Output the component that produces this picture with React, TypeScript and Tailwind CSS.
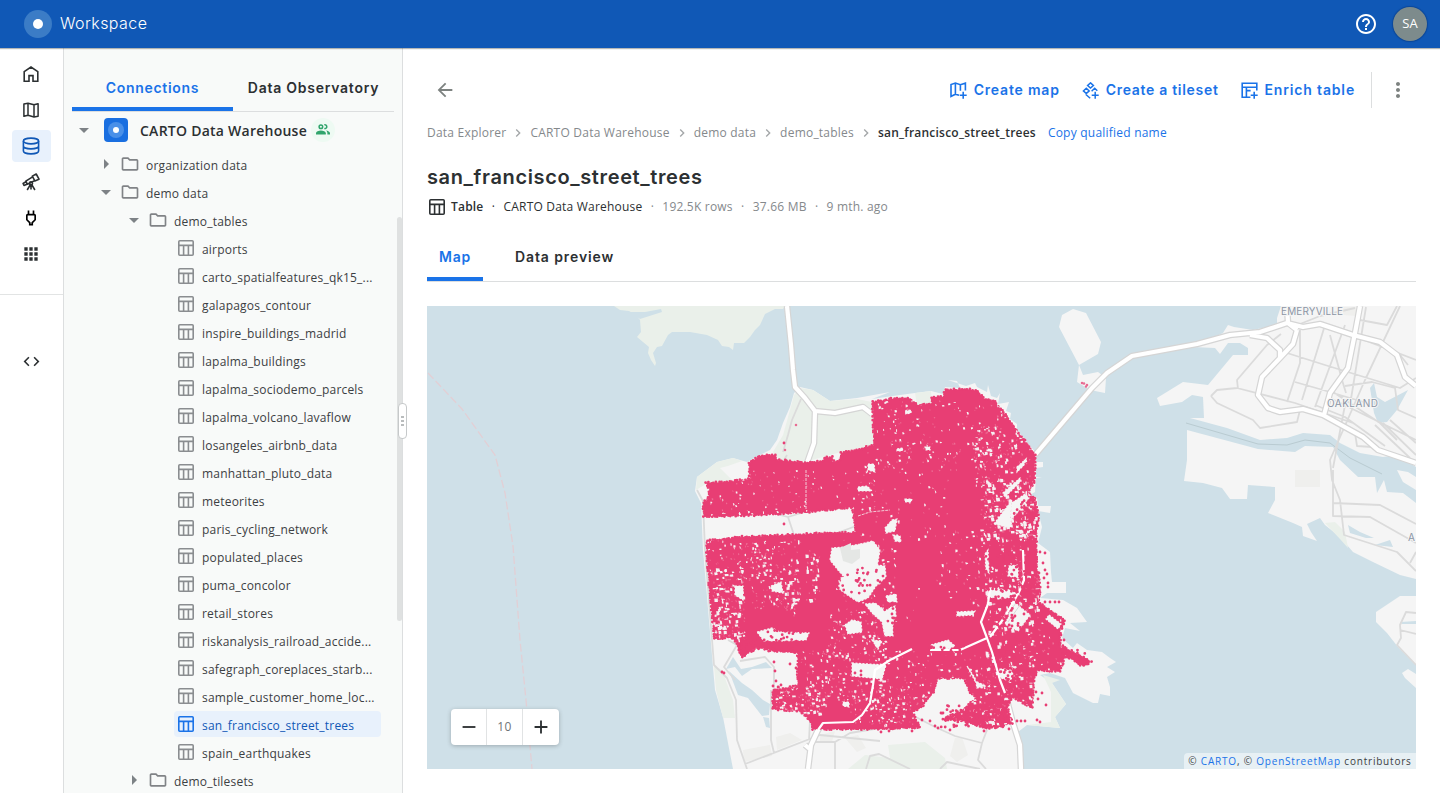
import type { ReactNode } from "react";
import {
  MdApps,
  MdArrowBack,
  MdArrowDropDown,
  MdArrowRight,
  MdCode,
  MdAdd,
  MdHelpOutline,
  MdKeyboardArrowRight,
  MdMoreVert,
  MdOutlineFolder,
  MdOutlinePower,
  MdRemove,
} from "react-icons/md";

type Pt = [number, number];

/* ---------- icons ---------- */

function HomeIcon() {
  return (
    <svg className="size-4" viewBox="0 0 16 16" fill="none" stroke="currentColor" strokeWidth="1.6">
      <path d="M1.2 15.2V5.6L8 1l6.8 4.6v9.6H10V9.6H6v5.6z" />
    </svg>
  );
}

function MapIcon() {
  return (
    <svg className="size-4" viewBox="0 0 16 16" fill="none" stroke="currentColor" strokeWidth="1.5" strokeLinejoin="round">
      <path d="M.9 2 5 1.2l6 1.6 4.1-1v12.4l-4.1.8-6-1.7-4.1 1zM5 1.2v12.1M11 2.8V15" />
    </svg>
  );
}

function DatabaseIcon() {
  return (
    <svg className="size-[18px]" viewBox="0 0 18 18" fill="none" stroke="currentColor" strokeWidth="1.6">
      <ellipse cx="9" cy="4" rx="7.6" ry="2.9" />
      <path d="M1.4 4v10c0 1.6 3.4 2.9 7.6 2.9s7.6-1.3 7.6-2.9V4M1.4 9c0 1.6 3.4 2.9 7.6 2.9s7.6-1.3 7.6-2.9" />
    </svg>
  );
}

function TelescopeIcon() {
  return (
    <svg className="size-[18px]" viewBox="0 0 18 18" fill="none" stroke="currentColor" strokeWidth="1.6" strokeLinejoin="round">
      <path d="M10.3 3.1 14.2 1 17 6.2l-4.2 1.7zM10.6 3.8 3.8 8.2l1.5 3 7.2-3.5M3.9 8.8l-2.8 1.7.9 1.9 3-1.2" />
      <circle cx="9" cy="10.4" r="1.5" />
      <path d="M8.2 11.8 5.2 17M9.9 11.8l3 5.2M9 12v4.5" />
    </svg>
  );
}

function PeopleIcon() {
  return (
    <svg className="h-[11px] w-[14px]" viewBox="0 0 14 11" fill="currentColor">
      <path d="M0 10.6V9.2C0 7.3 2.6 6.4 4.9 6.4s4.9.9 4.9 2.8v1.4z" />
      <path d="M10 6.5c2 .3 4 1.2 4 2.7v1.4h-2.6V9.2c0-1.100-.5-2-1.4-2.700z" />
      <circle cx="4.900" cy="2.700" r="1.800" fill="none" stroke="currentColor" strokeWidth="1.500" />
      <path d="M8.300.9a1.900 1.900 0 1 1 0 3.600" fill="none" stroke="currentColor" strokeWidth="1.500" />
    </svg>
  );
}

function TableIcon({ className }: { className: string }) {
  return (
    <svg className={className} viewBox="0 0 16 16" fill="none" stroke="currentColor" strokeWidth="1.6">
      <rect x=".8" y=".8" width="14.4" height="14.4" rx="1" />
      <path d="M.8 5.4h14.4M5.6 5.4V15M10.400 5.400V15" />
    </svg>
  );
}

function CreateMapIcon() {
  return (
    <svg className="size-[17px]" viewBox="0 0 17 17" fill="none" stroke="currentColor" strokeWidth="1.6">
      <path d="M9 13.2l-3.6-1L1 14.4V2.6l4.4-1.5 5 1.6 5-1.5v7.3M5.4 1.1v11.1M10.4 2.7v6M13.2 9.8v7M9.7 13.3h7" />
    </svg>
  );
}

function TilesetIcon() {
  return (
    <svg className="size-[17px]" viewBox="0 0 17 17" fill="none" stroke="currentColor" strokeWidth="1.5">
      <path d="M8.5.9 11.4 3.5 8.5 6.1 5.6 3.5zM4.3 6.2 7.2 8.9 4.3 11.6 1.4 8.9zM9.6 9.2l3.1-3 2.6 2.5M3.6 12.3l4.6 3.9M13.2 9.8v7M9.7 13.3h7" />
    </svg>
  );
}

function EnrichIcon() {
  return (
    <svg className="size-[17px]" viewBox="0 0 17 17" fill="none" stroke="currentColor" strokeWidth="1.6">
      <path d="M9.4 15.2H1.2V1.2h14.6v7.2M1.2 5.2h14.6M5.4 5.2v10M5.4 8.6h4.2M13.2 9.8v7M9.7 13.3h7" />
    </svg>
  );
}

/* ---------- header and navigation ---------- */

function Header() {
  return (
    <header className="relative z-10 flex h-12 shrink-0 items-center bg-[#1058b6] pl-6 pr-[13px] text-white shadow-[0_1px_1px_rgba(44,48,50,0.35)]">
      <span className="flex size-7 items-center justify-center rounded-full bg-[#3b7cc6]">
        <span className="size-[10px] rounded-full bg-white" />
      </span>
      <span className="mb-[2px] ml-2 text-base font-light tracking-[0.42px]">Workspace</span>
      <MdHelpOutline className="ml-auto size-6" />
      <span className="ml-[15px] flex size-[34px] items-center justify-center rounded-full bg-[#7d8b8c] font-['Open_Sans',sans-serif] text-[13px] tracking-[0.2px] shadow-[0_0_1px_1px_rgba(0,40,100,0.35)]">
        SA
      </span>
    </header>
  );
}

function RailItem({ active, children }: { active?: boolean; children: ReactNode }) {
  return (
    <span
      className={
        active
          ? "flex h-8 w-[39px] items-center justify-center rounded bg-[#e8f1fc] text-[#1058b6]"
          : "flex h-8 w-[39px] items-center justify-center rounded"
      }
    >
      {children}
    </span>
  );
}

function Rail() {
  return (
    <nav className="flex w-16 shrink-0 flex-col border-r border-[#dcdedf] bg-white text-[#2c3032]">
      <div className="flex h-[247px] flex-col items-center gap-1 border-b border-[#e2e4e4] pr-px pt-[10px]">
        <RailItem><HomeIcon /></RailItem>
        <RailItem><MapIcon /></RailItem>
        <RailItem active><DatabaseIcon /></RailItem>
        <RailItem><TelescopeIcon /></RailItem>
        <RailItem><MdOutlinePower className="size-5 text-black" /></RailItem>
        <RailItem><MdApps className="size-5" /></RailItem>
      </div>
      <div className="flex flex-col items-center pr-px pt-[50px]">
        <RailItem><MdCode className="size-[19px]" /></RailItem>
      </div>
    </nav>
  );
}

const tables = [
  "airports",
  "carto_spatialfeatures_qk15_...",
  "galapagos_contour",
  "inspire_buildings_madrid",
  "lapalma_buildings",
  "lapalma_sociodemo_parcels",
  "lapalma_volcano_lavaflow",
  "losangeles_airbnb_data",
  "manhattan_pluto_data",
  "meteorites",
  "paris_cycling_network",
  "populated_places",
  "puma_concolor",
  "retail_stores",
  "riskanalysis_railroad_accide...",
  "safegraph_coreplaces_starb...",
  "sample_customer_home_loc...",
  "san_francisco_street_trees",
  "spain_earthquakes",
];

function FolderRow({ label, open, nested }: { label: string; open?: boolean; nested?: boolean }) {
  const Arrow = open ? MdArrowDropDown : MdArrowRight;
  return (
    <div className={nested ? "flex h-[26px] shrink-0 items-center pl-[58px]" : "flex h-[26px] shrink-0 items-center pl-[30px]"}>
      <Arrow className="size-6 text-[#7d8286]" />
      <MdOutlineFolder className="ml-[2px] size-5 text-[#808386]" />
      <span className="ml-[6px] pt-1">{label}</span>
    </div>
  );
}

function TableRow({ label }: { label: string }) {
  const selected = label === "san_francisco_street_trees";
  return (
    <div
      className={
        selected
          ? "ml-[110px] flex h-[26px] w-[207px] shrink-0 items-center whitespace-nowrap rounded bg-[#e8f1fc] pl-1 text-[#1058b6]"
          : "ml-[110px] flex h-[26px] w-[207px] shrink-0 items-center whitespace-nowrap pl-1"
      }
    >
      <TableIcon className={selected ? "size-4 text-[#1a73e8]" : "size-4 text-[#8a8d90]"} />
      <span className="ml-2 pt-1">{label}</span>
    </div>
  );
}

function Sidebar() {
  return (
    <aside className="relative flex w-[339px] shrink-0 flex-col border-r border-[#dcdedf] bg-[#f8faf9]">
      <div className="mx-2 mt-4 flex h-12 border-b border-[#dcdedf] text-[14px] font-semibold">
        <span className="flex w-[161px] items-center justify-center border-b-4 border-[#1a73e8] pt-1 tracking-[0.7px] text-[#1a73e8]">
          Connections
        </span>
        <span className="flex w-[161px] items-center justify-center tracking-[0.75px] text-[#2c3032]">Data Observatory</span>
      </div>
      <div className="flex min-h-0 flex-1 flex-col gap-[2px] overflow-hidden font-['Open_Sans',sans-serif] text-[12px] tracking-[0.2px] text-[#3c4043]">
        <div className="flex h-[37px] shrink-0 items-center pb-[2px] pl-2">
          <MdArrowDropDown className="size-6 text-[#7d8286]" />
          <span className="ml-2 flex size-6 items-center justify-center rounded-[4px] bg-[#1a6fe0]">
            <span className="flex size-4 items-center justify-center rounded-full bg-[#4a90e8]">
              <span className="size-[6px] rounded-full bg-white" />
            </span>
          </span>
          <span className="ml-3 pt-[2px] text-[14px] font-semibold tracking-[0.25px] text-[#2c3032]">CARTO Data Warehouse</span>
          <span className="ml-[4px] flex size-6 items-center justify-center rounded-full bg-[#eefaf3] text-[#30a46c]">
            <PeopleIcon />
          </span>
        </div>
        <FolderRow label="organization data" />
        <FolderRow label="demo data" open />
        <FolderRow label="demo_tables" open nested />
        {tables.map((t) => (
          <TableRow key={t} label={t} />
        ))}
        <FolderRow label="demo_tilesets" nested />
      </div>
      <div className="absolute right-0 top-[169px] h-[404px] w-[5px] rounded bg-[#dfe1e1]" />
      <div className="absolute -right-[5px] top-[355px] flex h-9 w-[9px] flex-col items-center justify-center gap-[2px] rounded border border-[#c6c9ca] bg-white">
        <span className="h-[2px] w-[3px] bg-[#b9bcbd]" />
        <span className="h-[2px] w-[3px] bg-[#b9bcbd]" />
        <span className="h-[2px] w-[3px] bg-[#b9bcbd]" />
      </div>
    </aside>
  );
}

/* ---------- map ---------- */

const trees: Pt[] = [
  [706, 483], [727, 482], [750, 479], [749, 463], [760, 456], [775, 455], [777, 460], [807, 463], [823, 461], [824, 458],
  [832, 457], [832, 462], [840, 460], [841, 453], [857, 450], [874, 445], [873, 402], [897, 398], [910, 399], [917, 405],
  [932, 404], [932, 397], [943, 397], [945, 390], [967, 389], [978, 391], [983, 398], [995, 402], [1007, 417], [1017, 431],
  [1035, 455], [1034, 483], [1027, 492], [1035, 499], [1038, 515], [1036, 537], [1037, 570], [1040, 590], [1038, 602],
  [1065, 621], [1060, 630], [1060, 645], [1080, 656], [1091, 662], [1083, 666], [1065, 655], [1060, 671], [1037, 670],
  [1033, 683], [1032, 708], [1013, 697], [1007, 707], [1012, 723], [997, 727], [987, 728], [963, 721], [943, 719],
  [963, 710], [977, 697], [970, 693], [965, 678], [937, 678], [933, 693], [923, 705], [912, 713], [920, 727], [900, 728],
  [880, 729], [867, 729], [840, 729], [813, 729], [810, 720], [800, 711], [773, 709], [773, 690], [780, 690], [798, 685],
  [798, 653], [775, 651], [757, 647], [742, 657], [737, 643], [731, 637], [715, 639], [710, 593], [707, 553], [707, 541],
  [742, 537], [793, 535], [827, 533], [856, 533], [853, 507], [807, 512], [754, 515], [704, 517], [703, 503], [708, 499],
  [710, 490],
];

const clearings = [
  "M860 544 873 541 880 550 877 568 868 580 858 586 845 578 838 570 830 560 832 548 845 547z",
  "M866 564 885 566 886 577 876 586 868 598 858 602 846 594 838 588 842 578 855 574z",
  "M865 604 875 603 884 610 895 606 896 616 892 622 893 636 885 636 882 622 872 613z",
  "M757 632 772 628 780 632 809 633 806 640 782 641 764 641z",
  "M845 625 852 620 861 622 862 632 848 634z",
  "M852 663 886 665 882 679 852 676z",
  "M771 586 781 582 783 593 772 591z",
  "M735 586 743 586 743 600 735 595z",
  "M868 464 874 464 875 472 868 470z",
  "M858 487 867 486 872 491 858 491z",
  "M892 520 897 519 895 531 886 533 885 528z",
  "M893 535 900 536 901 542 895 541z",
  "M905 411 911 410 911 413 906 414z",
  "M905 499 912 499 911 502 905 502z",
  "M897 449 903 448 902 451 897 451z",
  "M925 447 930 447 930 450 926 450z",
  "M1017 467 1026 459 1024 465 1017 472z",
  "M1003 493 1020 478 1021 481 1005 497z",
  "M994 524 1012 500 1010 517 1012 527 1002 526z",
  "M1012 503 1025 494 1029 498 1021 508 1010 521z",
  "M957 612 975 611 973 615 957 616z",
  "M967 666 975 678 977 688 986 686 975 681z",
  "M1000 669 1010 669 1014 676 1009 681 999 677z",
  "M1014 602 1030 615 1018 631 1005 624z",
  "M1049 615 1061 624 1058 629 1046 619z",
  "M1009 566 1018 565 1018 578 1008 576z",
  "M990 588 1010 590 1020 596 998 599 990 597z",
  "M872 640 882 641 878 649z",
  "M931 645 948 640 955 646 946 650 934 650z",
  "M886 596 896 594 897 602 888 602z",
  "M882 612 894 611 892 636 884 632z",
  "M843 702 849 702 849 707 843 706z",
  "M985 554 988 550 989 573 986 570z",
];

const land = [
  "M695 491 697 477 705 471 717 462 733 458 747 462 760 455 770 450 777 440 783 423 790 407 794 393 800 387 813 390 830 401 857 398 890 392 872 399 900 395 915 393 931 391 943 394 945 387 960 388 957 381 948 380 966 386 975 383 977 387 987 392 988 385 991 396 997 398 1000 393 998 404 1009 402 1006 411 1011 413 1010 419 1017 424 1017 430 1036 453 1036 462 1043 462 1043 467 1036 468 1036 477 1042 477 1036 478 1035 492 1030 495 1037 498 1038 506 1051 506 1050 513 1038 511 1042 527 1038 543 1050 552 1051 572 1052 582 1066 582 1066 593 1047 593 1040 598 1063 600 1077 608 1087 622 1070 623 1080 631 1065 628 1062 638 1073 648 1077 643 1087 650 1102 652 1110 658 1116 662 1107 667 1115 672 1107 677 1110 687 1110 696 1100 694 1098 703 1093 703 1073 693 1065 678 1050 673 1040 675 1052 683 1066 704 1055 717 1060 728 1027 725 1018 732 1022 747 1023 769 733 769 723 717 715 690 713 667 703 550 701 503z",
  "M1059 327 1062 315 1073 309 1086 313 1101 342 1098 354 1079 365 1083 375 1098 372 1106 378 1105 393 1090 390 1077 382 1079 365z",
  "M1281 306 1277 318 1277 325 1253 330 1234 327 1228 325 1223 333 1193 347 1215 348 1220 354 1228 343 1240 343 1248 348 1248 355 1233 355 1208 385 1183 382 1157 398 1160 406 1182 402 1192 395 1203 397 1204 418 1190 418 1227 428 1260 440 1287 438 1303 433 1330 435 1340 443 1360 453 1383 457 1397 455 1416 467V306z",
  "M1187 430 1258 449 1295 452 1305 446 1333 447 1340 460 1358 477 1375 477 1377 493 1384 480 1387 492 1403 493 1416 503V579L1400 575 1373 562 1353 552 1340 537 1325 525 1320 518 1307 524 1311 532 1317 541 1303 536 1302 527 1293 523 1268 513 1275 500 1275 487 1248 485 1247 499 1230 499 1222 488 1203 483 1184 481 1187 460z",
  "M1397 470 1408 472 1416 477V490L1403 482z",
  "M1400 596H1416V665L1398 647 1387 633 1376 622V612z",
  "M1402 673 1408 669 1416 674V688L1405 678z",
];

const parks = [
  "M614 306 620 310 629 311 636 315 640 320 641 332 637 337 649 347 648 353 651 360 655 366 656 363 653 353 657 347 662 346 668 335 672 332 690 332 707 335 718 340 722 346 729 347 733 350 734 343 744 343 750 337 755 330 760 325 765 314 775 309 783 309 785 306z",
  "M800 388 813 390 830 401 857 399 872 402 875 445 841 452 808 461 780 461 773 452 783 435 790 410 794 395z",
  "M696 490 697 477 705 471 717 462 733 458 742 461 728 466 720 468 732 480 706 484z",
  "M915 393 931 391 932 403 917 405z",
  "M714 666 722 670 733 700 735 718 723 718 716 690z",
  "M1043 675 1060 680 1052 683 1066 704 1055 717 1060 728 1027 725 1051 722 1051 692z",
  "M888 745 925 742 945 758 947 769 848 769 865 755 890 758z",
  "M1325 523 1335 522 1345 532 1348 548 1340 539z",
];

const water = [
  "M629 312 645 312 661 309 662 312 640 319z",
  "M733 657 741 669 752 667 766 662 772 668 752 669 742 676 735 667 726 669z",
  "M729 671 742 683 752 690 763 700 770 704 769 715 762 716 748 698 738 695z",
  "M763 717 769 718 770 728 766 727z",
  "M1370 388 1374 383 1377 397 1385 402 1408 390 1397 410 1387 422 1378 423 1374 413z",
  "M1348 525 1360 532 1374 538 1366 538 1350 533z",
  "M1375 545 1390 540 1393 547z",
  "M1400 622 1416 621V624L1402 624z",
];

const streets = [
  "M697 490 703 501 705 550 714 665 727 678 736 700 737 740 747 769M735 680 724 667 737 645 728 640M745 764 820 735 880 741M771 690 771 740 774 753",
  "M740 661 752 659 765 657 774 667 774 690M835 742 835 769M812 742 835 742 850 733 880 728M810 720 809 740",
  "M866 769 870 756 879 754 910 769M912 715 935 727 955 736 982 743 987 730M940 769 947 762 980 769M982 743 978 760 986 769",
  "M787 455 784 460M801 399 792 420 788 435 783 452M776 514 788 517 794 535M788 517 808 511M837 533 856 526 856 510M807 463 808 510",
  "M1238 389 1237 380 1267 345 1281 334M1211 396 1217 390 1237 388 1295 403 1353 423M1211 396 1217 403 1253 420 1260 428 1297 422 1300 410",
  "M1300 330V363L1287 402M1325 325 1302 400M1345 325 1315 407M1287 353 1325 365 1400 388 1416 378M1295 382 1330 392 1370 404",
  "M1330 335 1342 380 1346 393M1400 306 1365 380 1330 460 1332 480 1340 500 1344 535 1397 552 1416 571M1360 320 1387 325 1397 306M1333 328 1416 360",
  "M1290 328 1320 316 1355 308M1315 405 1345 417 1385 446M1330 398 1416 440M1345 386 1372 382 1395 388 1398 410 1416 418M1333 392 1380 423 1397 440",
  "M1355 433 1357 446 1372 447M1345 405 1333 468M1375 425 1410 458M1383 423 1416 455M1390 420 1416 443M1333 470V516L1370 517 1416 543M1333 503 1380 505 1416 524M1416 552 1410 563",
  "M1416 613 1406 612 1400 625 1401 638 1397 645 1416 665M1400 630 1416 634M1366 307 1350 405M1400 355 1408 365",
];

const highways = [
  "M787 306 791 345 793 370 795 387 805 398 815 411 835 413 863 407 872 414M815 411 814 443 807 463",
  "M1035 455 1092 388 1107 373 1132 356 1197 344 1230 335 1260 332 1287 323 1303 327 1320 324 1353 335 1380 342 1397 355 1405 377 1416 386",
  "M1250 335 1267 338 1280 350 1280 358 1262 377 1258 395 1268 408 1280 412 1303 409 1323 415 1363 437 1378 450 1416 463",
  "M1297 330 1293 344 1280 358M1360 306 1355 333 1348 368 1330 393 1324 415M1287 306 1288 323 1297 330",
  "M808 769 811 745 818 730 823 723M805 745 811 750M1005 693 1013 723 1020 745 1021 769",
];

const freeways =
  "M818 730 823 723 853 722 862 715 870 703 873 685 875 670 890 660 912 649M930 650 960 650 987 638 981 622 988 604 990 588M987 638 992 652 1000 680 1005 693M1023 550 1024 580 1019 592 1004 618 990 637";

function makeRandom(seed: number) {
  let s = seed;
  return () => {
    s = (s * 1664525 + 1013904223) % 4294967296;
    return s / 4294967296;
  };
}

const dot = (x: number, y: number, r: number) =>
  `M${(x - r).toFixed(1)} ${y.toFixed(1)}a${r} ${r} 0 1 0 ${2 * r} 0a${r} ${r} 0 1 0 ${-2 * r} 0`;

/** Tree points along the outline of the covered area. */
function edgeDots(points: Pt[]) {
  const rnd = makeRandom(11);
  let d = "";
  points.forEach(([x1, y1], i) => {
    const [x2, y2] = points[(i + 1) % points.length];
    const n = Math.max(1, Math.round(Math.hypot(x2 - x1, y2 - y1) / 2.6));
    for (let k = 0; k < n; k++) {
      const t = k / n;
      d += dot(x1 + (x2 - x1) * t + rnd() * 1.6 - 0.8, y1 + (y2 - y1) * t + rnd() * 1.6 - 0.8, 1.4);
    }
  });
  return d;
}

/** x, y, width, height, count, maximum gap size */
const gapZones: [number, number, number, number, number, number][] = [
  [706, 470, 170, 45, 60, 1.3],
  [706, 540, 60, 40, 45, 1.6],
  [712, 568, 32, 72, 90, 3],
  [750, 538, 50, 70, 70, 2],
  [805, 550, 14, 50, 18, 3.2],
  [782, 565, 16, 50, 18, 3],
  [835, 540, 60, 70, 40, 2],
  [860, 440, 90, 100, 45, 1.6],
  [875, 400, 130, 70, 90, 1.6],
  [970, 425, 60, 60, 75, 2.4],
  [980, 480, 58, 60, 150, 3.2],
  [940, 530, 100, 60, 50, 2],
  [985, 575, 55, 60, 80, 3],
  [890, 560, 90, 70, 14, 1.5],
  [825, 610, 60, 50, 60, 2],
  [800, 650, 50, 55, 60, 2],
  [850, 680, 60, 45, 55, 2],
  [775, 685, 45, 28, 50, 2.8],
  [870, 650, 120, 78, 120, 2],
  [985, 640, 50, 85, 80, 2.6],
  [1010, 600, 60, 70, 25, 1.5],
];

function gaps(light: boolean) {
  const rnd = makeRandom(light ? 5 : 29);
  let d = "";
  for (const [x, y, w, h, n, m] of gapZones) {
    for (let i = 0; i < n; i++) {
      const gx = x + rnd() * w;
      const gy = y + rnd() * h;
      const a = 0.7 + rnd() * (light ? 0.8 : m);
      const b = 0.7 + rnd() * (light ? 0.8 : m);
      d += `M${gx.toFixed(1)} ${gy.toFixed(1)}l${a.toFixed(1)} ${(rnd() - 0.5).toFixed(1)} ${(rnd() * 0.8).toFixed(1)} ${b.toFixed(1)} ${(-a).toFixed(1)} ${(rnd() * 0.8).toFixed(1)}z`;
    }
  }
  return d;
}

/** Loose points: x, y, width, height, count */
const looseZones: [number, number, number, number, number][] = [
  [838, 568, 36, 26, 22],
  [866, 568, 18, 22, 8],
  [738, 630, 66, 22, 60],
  [774, 684, 26, 22, 28],
  [985, 588, 36, 40, 50],
  [986, 550, 50, 42, 60],
  [941, 705, 65, 22, 90],
  [1000, 632, 30, 60, 60],
  [1060, 650, 25, 10, 16],
  [1012, 500, 24, 25, 30],
  [930, 645, 35, 10, 14],
  [884, 596, 10, 34, 10],
];

const singles: Pt[] = [
  [784, 443], [784, 524], [722, 672], [724, 673], [774, 662], [775, 671], [776, 681], [781, 685],
  [790, 664], [796, 668], [773, 686], [1040, 552], [1045, 553], [1043, 563],
  [1045, 570], [1047, 574], [1044, 578], [1048, 583], [1048, 587], [1039, 573], [1045, 602], [1050, 602], [1055, 602],
  [1059, 602], [1036, 692], [1042, 693], [1046, 705], [1038, 699], [1037, 720], [1040, 722], [1017, 721], [1021, 721], [1025, 721],
  [941, 713], [943, 713], [922, 720], [930, 721], [935, 726], [938, 728], [1061, 635], [1064, 640], [1080, 660], [1087, 664],
  [881, 732], [912, 731], [889, 731], [950, 730], [984, 731], [1009, 729], [855, 673], [861, 671], [861, 675], [1013, 618], [1015, 616], [1024, 614],
];

const faintSingles: Pt[] = [[796, 425], [785, 450], [1082, 383], [1084, 383.5], [1087, 385], [1086, 386.500]];

function looseDots() {
  const rnd = makeRandom(77);
  let d = singles.map(([x, y]) => dot(x, y, 1.4)).join("");
  for (const [x, y, w, h, n] of looseZones) {
    for (let i = 0; i < n; i++) d += dot(x + rnd() * w, y + rnd() * h, 1.4);
  }
  return d;
}

const treePath = "M" + trees.map((p) => p.join(" ")).join("L") + "Z";
const edgePath = edgeDots(trees);
const gapPath = gaps(false);
const lightGapPath = gaps(true);
const loosePath = looseDots();
const faintPath = faintSingles.map(([x, y]) => dot(x, y, 1.3)).join("");

function MapDrawing() {
  return (
    <svg className="block h-[463px] w-full" viewBox="427 306 989 463" preserveAspectRatio="xMinYMin slice">
      <defs>
        <clipPath id="covered">
          <path d={treePath} />
        </clipPath>
      </defs>
      <rect x="427" y="306" width="989" height="463" fill="#cfe0e8" />
      <path d="M428 373 462 409 495 455 505 493 513 546 520 640 526 700 532 769" fill="none" stroke="#e2cfd5" strokeWidth="1.3" strokeDasharray="8 3" />
      <path d={land.join("")} fill="#f5f5f5" />
      <path d={parks.join("")} fill="#eaf0ea" />
      <path
        d="M1295 470H1320V487H1295zM776 737 790 733 802 740 777 750zM743 750 770 745 772 756 744 762zM820 735 835 731 832 742 820 741zM845 738 858 735 866 748 857 752zM955 738 962 737 968 755 957 762 950 756zM1343 307H1356V316L1343 315z"
        fill="#efefed"
      />
      <path d={water.join("")} fill="#cfe0e8" />
      <path d="M1186 423 1258 444 1287 445 1305 440 1330 443 1350 458 1382 474" fill="none" stroke="#b9cbd1" strokeWidth="1" />
      <path d={streets.join("")} fill="none" stroke="#dbdbdb" strokeWidth="1.8" strokeLinejoin="round" />
      <path d={highways.join("")} fill="none" stroke="#d5d5d5" strokeWidth="6.600" strokeLinejoin="round" />
      <path d={highways.join("")} fill="none" stroke="#ffffff" strokeWidth="4.200" strokeLinejoin="round" />

      <path d={treePath} fill="#e83e74" />
      <path d={edgePath} fill="#e83e74" />
      <g clipPath="url(#covered)">
        <path d={lightGapPath} fill="#ee6d95" />
        <path d={gapPath} fill="#f5f0f2" />
      </g>
      <path d={clearings.join("")} fill="#f5f5f5" stroke="#f5f5f5" strokeWidth="1.2" strokeDasharray="2 1.5" />
      <path d="M840 548 851 543 851 550 860 549 860 558 852 564 843 561z" fill="#e5e7e5" />
      <path d="M858 516 870 512 890 510M806 470V510" fill="none" stroke="#f3c9d6" strokeWidth="1" strokeDasharray="3 1" />
      <path d={freeways} fill="none" stroke="#ffffff" strokeWidth="2.2" strokeLinejoin="round" />
      <path d="M1004 620 1016 603M1008 622 1020 605" stroke="#d9d9d9" strokeWidth="1" />
      <path d={loosePath} fill="#e83e74" />
      <path d={faintPath} fill="#e86c93" />

      <g fill="#8c96a5" fontFamily="Inter, sans-serif" fontSize="10" stroke="#f5f5f5" strokeWidth="2" paintOrder="stroke">
        <text x="1281" y="315" textLength="62">EMERYVILLE</text>
        <text x="1327" y="407" textLength="51">OAKLAND</text>
        <text x="1408" y="541">A</text>
      </g>
    </svg>
  );
}

function MapPanel() {
  return (
    <div className="relative mt-6 h-[463px] overflow-hidden">
      <MapDrawing />
      <div className="absolute bottom-6 left-6 flex h-9 w-[108px] items-center rounded bg-white text-[#2c3032] shadow-[0_1px_4px_rgba(44,48,50,0.3)]">
        <span className="flex h-full w-9 items-center justify-center border-r border-[#e1e3e4]">
          <MdRemove className="size-[22px]" />
        </span>
        <span className="flex h-full w-9 items-center justify-center border-r border-[#e1e3e4] font-['Open_Sans',sans-serif] text-[12px] font-medium tracking-[0.4px] text-[#6f7477]">
          10
        </span>
        <span className="flex h-full flex-1 items-center justify-center">
          <MdAdd className="size-[22px]" />
        </span>
      </div>
      <div className="absolute bottom-0 right-0 flex h-4 w-[232px] items-center justify-center whitespace-pre rounded-tl bg-white/50 font-['Open_Sans',sans-serif] text-[10px] tracking-[0.8px] text-[#3c4043]">
        © <span className="text-[#1a73e8]">CARTO</span>, © <span className="text-[#1a73e8]">OpenStreetMap</span> contributors
      </div>
    </div>
  );
}

/* ---------- content ---------- */

function Action({ icon, label, className }: { icon: ReactNode; label: string; className: string }) {
  return (
    <span className={className}>
      {icon}
      <span className="mb-px">{label}</span>
    </span>
  );
}

function Crumb({ label }: { label: string }) {
  return (
    <>
      <span>{label}</span>
      <MdKeyboardArrowRight className="mx-1 size-4 text-[#a3a6a8]" />
    </>
  );
}

function Content() {
  return (
    <main className="flex min-w-0 flex-1 flex-col bg-white px-6 pt-6 text-[#2c3032]">
      <div className="flex h-9 items-center pl-2 text-[14px] font-semibold text-[#1a73e8]">
        <MdArrowBack className="-ml-px size-[22px] text-[#7d8280]" />
        <Action icon={<CreateMapIcon />} label="Create map" className="ml-auto flex items-center gap-[7px] tracking-[0.8px]" />
        <Action icon={<TilesetIcon />} label="Create a tileset" className="ml-[22px] flex items-center gap-[7px] tracking-[0.7px]" />
        <Action icon={<EnrichIcon />} label="Enrich table" className="ml-[22px] flex items-center gap-[7px] tracking-[0.84px]" />
        <span className="ml-4 h-9 w-px bg-[#dcdedf]" />
        <MdMoreVert className="ml-[14px] mr-[6px] size-6 text-[#7d8280]" />
      </div>

      <div className="mt-[15px] flex h-5 items-center font-['Open_Sans',sans-serif] text-[12px] tracking-[0.22px] text-[#85898c]">
        <Crumb label="Data Explorer" />
        <Crumb label="CARTO Data Warehouse" />
        <Crumb label="demo data" />
        <Crumb label="demo_tables" />
        <span className="font-semibold text-[#2c3032]">san_francisco_street_trees</span>
        <span className="ml-3 text-[#1a73e8]">Copy qualified name</span>
      </div>

      <h1 className="mt-5 h-7 text-[20px] font-semibold leading-7 tracking-[0.63px]">san_francisco_street_trees</h1>

      <div className="mt-[6px] flex h-5 items-center font-['Open_Sans',sans-serif] text-[12px] tracking-[0.2px] text-[#85898c]">
        <TableIcon className="ml-[2px] size-4 text-[#2c3032]" />
        <span className="ml-[6px] font-semibold text-[#2c3032]">Table</span>
        <span className="w-5 text-center text-[#2c3032]">·</span>
        <span className="text-[#2c3032]">CARTO Data Warehouse</span>
        <span className="w-5 text-center">·</span>
        <span>192.5K rows</span>
        <span className="w-5 text-center">·</span>
        <span>37.66 MB</span>
        <span className="w-5 text-center">·</span>
        <span>9 mth. ago</span>
      </div>

      <div className="mt-4 flex h-[49px] border-b border-[#dcdedf] text-[14px] font-semibold">
        <span className="flex w-14 items-center justify-center border-b-4 border-[#1a73e8] pt-[2px] tracking-[0.7px] text-[#1a73e8]">Map</span>
        <span className="ml-8 flex items-center pb-[2px] tracking-[0.9px]">Data preview</span>
      </div>

      <MapPanel />
    </main>
  );
}

export default function App() {
  return (
    <div className="flex h-[793px] w-[1440px] flex-col overflow-hidden bg-white font-['Inter',sans-serif]">
      <Header />
      <div className="flex min-h-0 flex-1">
        <Rail />
        <Sidebar />
        <Content />
      </div>
    </div>
  );
}
